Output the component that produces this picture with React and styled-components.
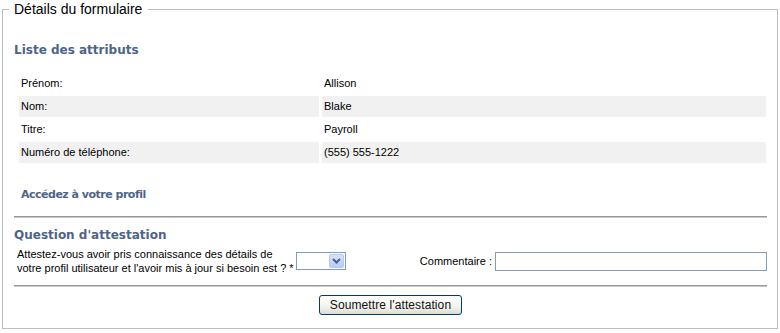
import React from "react";
import styled, { createGlobalStyle } from "styled-components";

const GlobalStyle = createGlobalStyle`
  html, body { margin: 0; padding: 0; background: #fff; }
  body { font-family: "Liberation Sans", Arial, sans-serif; color: #000; }
`;

const Fieldset = styled.fieldset`
  margin: 0 2px;
  padding: 0 10px 13px 11px;
  border: 1px solid #bdbdbd;
  min-width: 0;
`;

const Legend = styled.legend`
  font-family: "Liberation Sans", Arial, sans-serif;
  font-size: 14px;
  line-height: 19px;
  padding: 0 6px 0 5px;
  margin-left: -5px;
  color: #000;
`;

const SectionTitle = styled.h2`
  margin: ${(p) => p.$top}px 0 0 0;
  font-family: "DejaVu Sans", Verdana, sans-serif;
  font-weight: bold;
  font-size: 12px;
  line-height: 15px;
  color: #4e6487;
`;

const AttrGrid = styled.div`
  margin: 15px 1px 0 5px;
  display: grid;
  grid-template-columns: 300px 1fr;
  column-gap: 3px;
  row-gap: 2px;
`;

const Cell = styled.div`
  height: 21px;
  line-height: 21px;
  padding: 0 2px;
  font-size: 11px;
  background: ${(p) => (p.$alt ? "#f1f1f1" : "transparent")};
`;

const ProfileLink = styled.a`
  display: block;
  margin: 24px 0 0 7px;
  font-family: "DejaVu Sans", Verdana, sans-serif;
  font-weight: bold;
  font-size: 11px;
  letter-spacing: -0.5px;
  line-height: 15px;
  color: #4e6487;
  text-decoration: none;
`;

const Rule = styled.hr`
  margin: ${(p) => p.$top}px 0 0 0;
  border: 0;
  border-top: 1px solid #979797;
  border-bottom: 1px solid #c9c9c9;
  height: 0;
`;

const QuestionRow = styled.div`
  margin-top: 4px;
  padding-left: 3px;
  display: grid;
  grid-template-columns: auto 50px 1fr 272px;
  align-items: center;
  font-size: 11px;
`;

const QuestionText = styled.div`
  line-height: 14px;
  margin-right: 2px;
`;

const SelectWrap = styled.div`
  position: relative;
  width: 50px;
  height: 18px;
`;

const Select = styled.select`
  appearance: none;
  -webkit-appearance: none;
  box-sizing: border-box;
  width: 50px;
  height: 18px;
  border: 1px solid #7f9db9;
  background: #fff;
  border-radius: 0;
  font-size: 11px;
  padding: 0 2px;
  outline: none;
`;

const SelectArrow = styled.span`
  position: absolute;
  top: 2px;
  right: 2px;
  width: 15px;
  height: 14px;
  border-radius: 2px;
  background: linear-gradient(#d4e2fd, #b7cdf9);
  border: 1px solid #b5c9f2;
  box-sizing: border-box;
  display: flex;
  align-items: center;
  justify-content: center;
  pointer-events: none;
`;

const CommentLabel = styled.label`
  text-align: right;
  padding-right: 3px;
`;

const TextInput = styled.input`
  box-sizing: border-box;
  width: 272px;
  height: 19px;
  border: 1px solid #7f9db9;
  padding: 0 2px;
  font-size: 11px;
  outline: none;
`;

const ButtonRow = styled.div`
  margin-top: 8px;
  display: flex;
  justify-content: center;
`;

const SubmitButton = styled.button`
  box-sizing: border-box;
  height: 20px;
  width: 143px;
  padding: 0;
  border: 1px solid #003c74;
  border-radius: 3px;
  background: linear-gradient(#ffffff, #f3f3ee 60%, #dddbd2);
  font-family: "Liberation Sans", Arial, sans-serif;
  font-size: 12px;
  color: #111;
  letter-spacing: 0.1px;
`;

const attributes = [
  ["Prénom:", "Allison"],
  ["Nom:", "Blake"],
  ["Titre:", "Payroll"],
  ["Numéro de téléphone:", "(555) 555-1222"],
];

export default function App() {
  return (
    <>
      <GlobalStyle />
      <Fieldset>
        <Legend>Détails du formulaire</Legend>
        <SectionTitle $top={24}>Liste des attributs</SectionTitle>
        <AttrGrid>
          {attributes.map(([label, value], i) => (
            <React.Fragment key={label}>
              <Cell $alt={i % 2 === 1}>{label}</Cell>
              <Cell $alt={i % 2 === 1}>{value}</Cell>
            </React.Fragment>
          ))}
        </AttrGrid>
        <ProfileLink href="#">Accédez à votre profil</ProfileLink>
        <Rule $top={14} />
        <SectionTitle $top={10}>Question d'attestation</SectionTitle>
        <QuestionRow>
          <QuestionText>
            Attestez-vous avoir pris connaissance des détails de
            <br />
            votre profil utilisateur et l'avoir mis à jour si besoin est ? *
          </QuestionText>
          <SelectWrap>
            <Select defaultValue="">
              <option value=""></option>
              <option value="oui">Oui</option>
              <option value="non">Non</option>
            </Select>
            <SelectArrow>
              <svg width="9" height="6" viewBox="0 0 9 6">
                <path d="M1 1 L4.5 4.5 L8 1" fill="none" stroke="#4d6185" strokeWidth="2" />
              </svg>
            </SelectArrow>
          </SelectWrap>
          <CommentLabel>Commentaire :</CommentLabel>
          <TextInput type="text" />
        </QuestionRow>
        <Rule $top={10} />
        <ButtonRow>
          <SubmitButton type="button">Soumettre l'attestation</SubmitButton>
        </ButtonRow>
      </Fieldset>
    </>
  );
}
